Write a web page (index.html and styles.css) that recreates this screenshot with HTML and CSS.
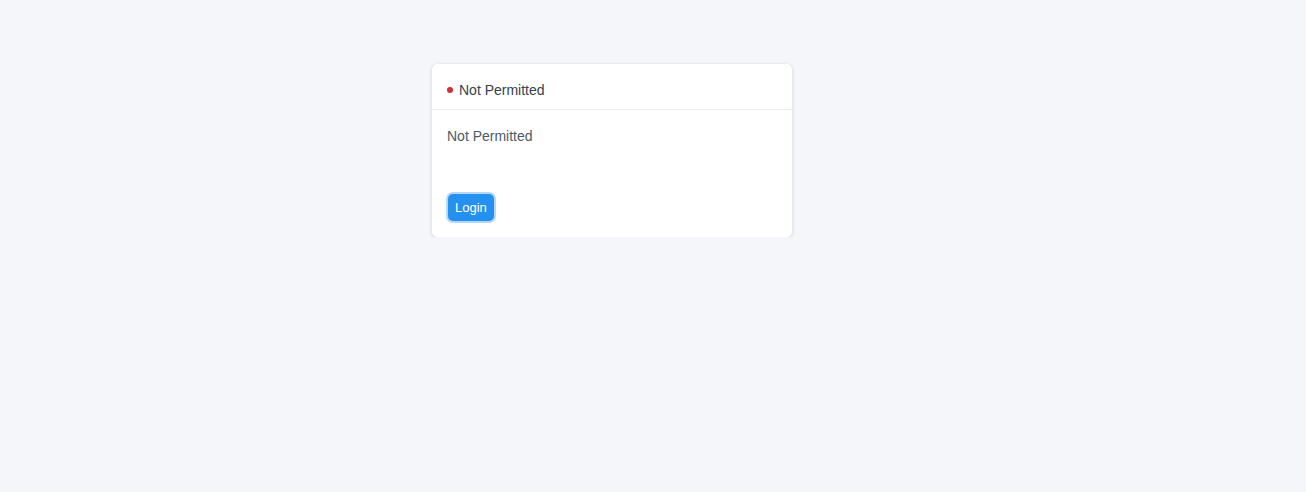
FILE: index.html
```html
<!DOCTYPE html>
<html lang="en">
<head>
    <meta charset="UTF-8">
    <meta name="viewport" content="width=device-width, initial-scale=1.0">
    <title>Not Permitted</title>
    <link rel="stylesheet" href="styles.css">
</head>
<body>
    <div class="page">
        <div class="card">
            <div class="card-header">
                <span class="dot"></span>
                <span class="title">Not Permitted</span>
            </div>
            <div class="card-body">
                <p class="message">Not Permitted</p>
                <button class="btn-login">Login</button>
            </div>
        </div>
    </div>
</body>
</html>
```

FILE: styles.css
```css
body {
    font-family: "Liberation Sans", Arial, sans-serif;
    background-color: #f5f6fa;
    margin: 0;
    padding: 0;
}
.page {
    padding: 64px 0 0 432px;
}
.card {
    width: 360px;
    background-color: #fff;
    border-radius: 5px;
    box-shadow: 0 1px 4px rgba(0, 0, 0, 0.13), 0 0 1px rgba(0, 0, 0, 0.1);
}
.card-header {
    display: flex;
    align-items: center;
    padding: 16px 15px 9px 15px;
    line-height: 20px;
    border-bottom: 1px solid #eef0f2;
}
.dot {
    width: 6px;
    height: 6px;
    border-radius: 50%;
    background-color: #d3302f;
    margin-right: 6px;
}
.title {
    font-size: 14px;
    color: #36414c;
}
.card-body {
    padding: 16px 15px 16px 15px;
}
.message {
    margin: 0 0 48px 0;
    font-size: 14px;
    line-height: 20px;
    color: #4c5a67;
}
.btn-login {
    display: block;
    margin-left: 1px;
    padding: 0 7px;
    height: 27px;
    font-family: inherit;
    font-size: 13px;
    color: #fff;
    background-color: #2490ef;
    border: none;
    border-radius: 5px;
    box-shadow: 0 0 0 2px #b6d7f7;
    cursor: pointer;
}
```
